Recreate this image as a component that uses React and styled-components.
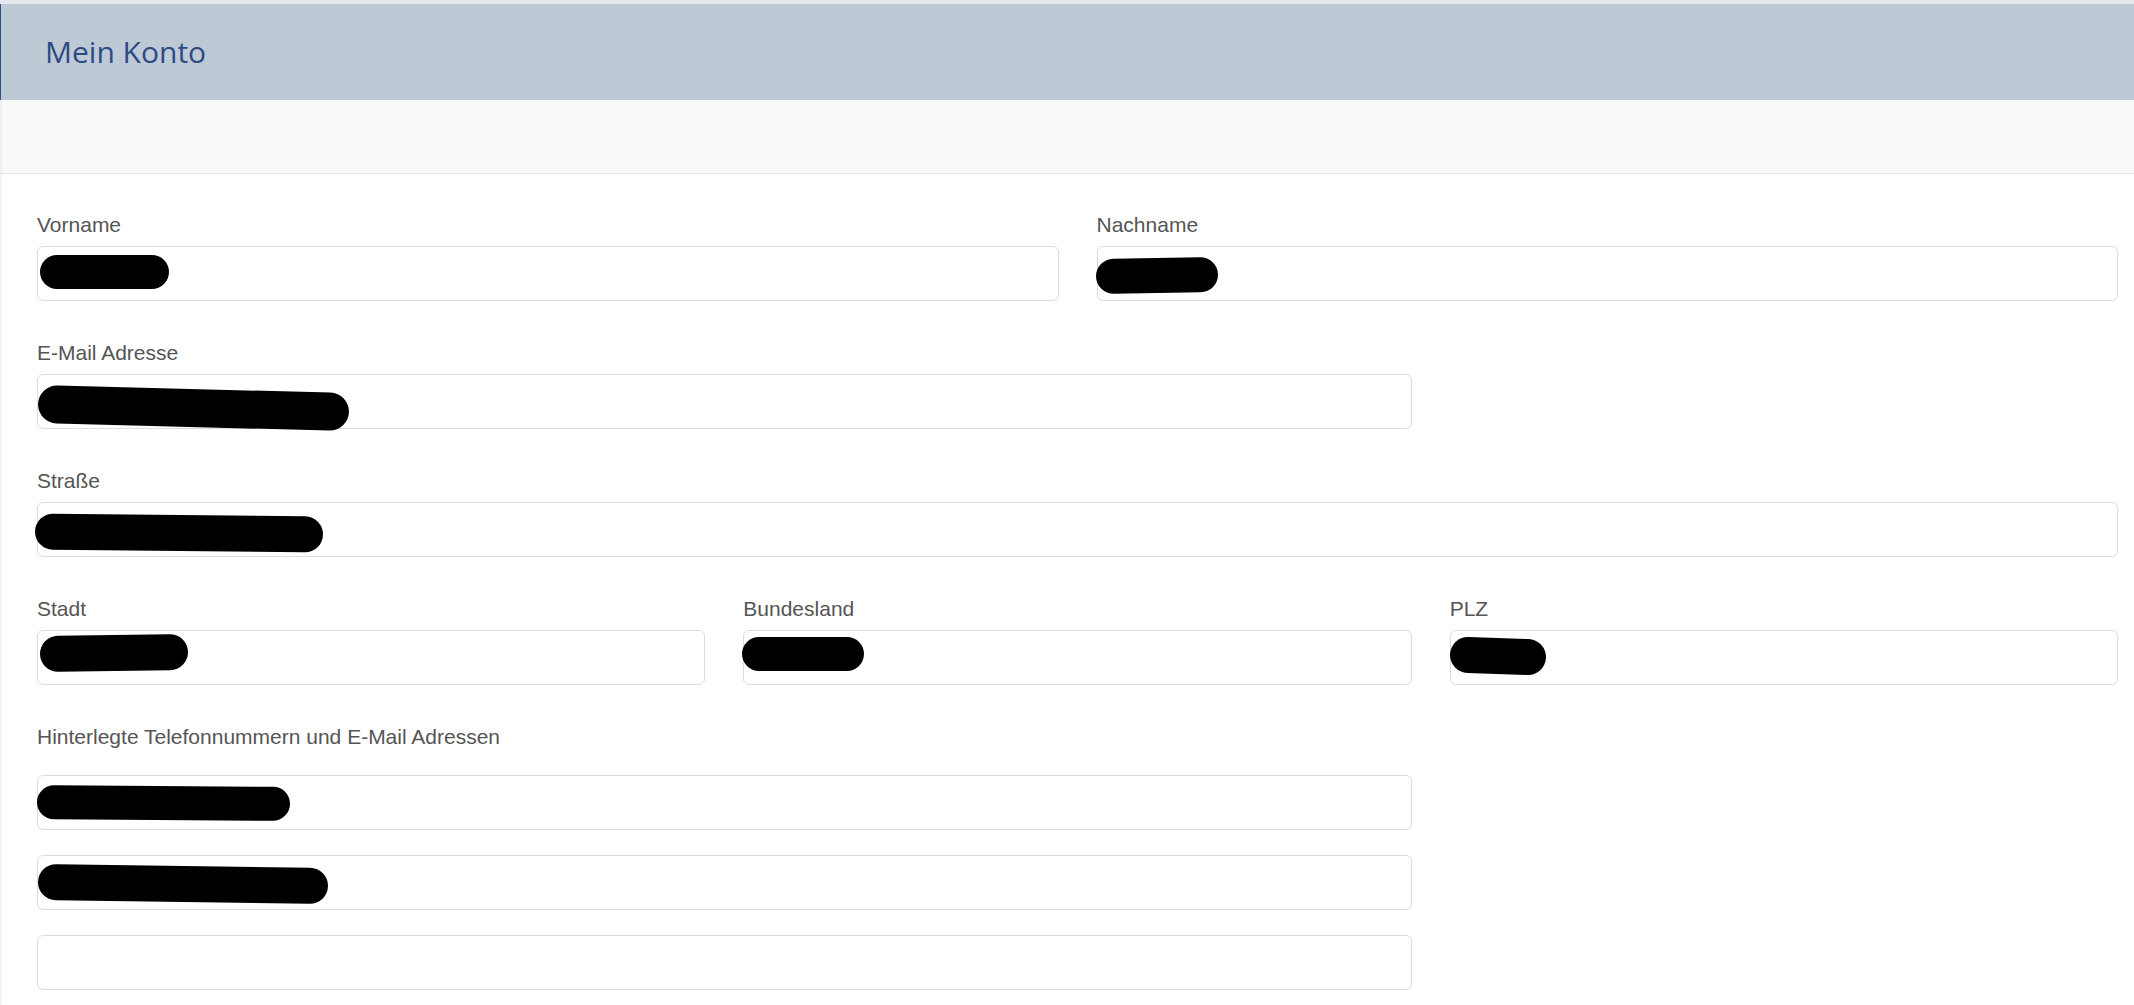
import React from "react";
import styled, { createGlobalStyle } from "styled-components";

const GlobalStyle = createGlobalStyle`
  * { box-sizing: border-box; }
  html, body {
    margin: 0;
    padding: 0;
    background: #ffffff;
  }
  body {
    font-family: "Liberation Sans", Arial, sans-serif;
  }
`;

const rows = [
  {
    cols: 2,
    fields: [
      { label: "Vorname", blob: { l: 2, t: 8, w: 129, h: 34 } },
      { label: "Nachname", blob: { l: -2, t: 11, w: 122, h: 35, r: -1 } },
    ],
  },
  {
    cols: 3,
    fields: [{ label: "E-Mail Adresse", span: 2, blob: { l: 0, t: 14, w: 311, h: 38, r: 1.5 } }],
  },
  {
    cols: 1,
    fields: [{ label: "Straße", blob: { l: -3, t: 12, w: 288, h: 36, r: 0.6 } }],
  },
  {
    cols: 3,
    fields: [
      { label: "Stadt", blob: { l: 2, t: 4, w: 148, h: 36, r: -0.8 } },
      { label: "Bundesland", blob: { l: -2, t: 6, w: 122, h: 34 } },
      { label: "PLZ", blob: { l: -1, t: 7, w: 96, h: 36, r: 2 } },
    ],
  },
];

const contacts = [
  { l: -1, t: 10, w: 253, h: 34, r: 0.4 },
  { l: 0, t: 10, w: 290, h: 36, r: 0.8 },
  null,
];

const blobStyle = (b) => ({
  left: b.l,
  top: b.t,
  width: b.w,
  height: b.h,
  transform: `rotate(${b.r || 0}deg)`,
});

export default function App() {
  return (
    <>
      <GlobalStyle />
      <Page>
        <Header>
          <Title>Mein Konto</Title>
        </Header>
        <SubBar />

        <Content>
          {rows.map((row, i) => (
            <Row key={i} $cols={row.cols}>
              {row.fields.map((f) => (
                <Group key={f.label} $span={f.span}>
                  <Label>{f.label}</Label>
                  <Field>
                    <Blob style={blobStyle(f.blob)} />
                  </Field>
                </Group>
              ))}
            </Row>
          ))}

          <Row $cols={3}>
            <Group $span={2}>
              <Label $wide>Hinterlegte Telefonnummern und E-Mail Adressen</Label>
              <ContactList>
                {contacts.map((b, i) => (
                  <Field key={i}>{b && <Blob style={blobStyle(b)} />}</Field>
                ))}
              </ContactList>
            </Group>
          </Row>
        </Content>
      </Page>
    </>
  );
}

const Page = styled.div`
  display: flex;
  flex-direction: column;
  min-height: 1005px;
  border-top: 4px solid #e6e8eb;
`;

const Header = styled.div`
  display: flex;
  align-items: center;
  height: 96px;
  padding-left: 44px;
  background: #bdcad6;
  border-left: 1px solid #2f4e8a;
`;

const Title = styled.h1`
  margin: 0;
  font-family: "Open Sans", "Noto Sans", sans-serif;
  font-size: 30px;
  font-weight: 400;
  line-height: 40px;
  color: #2d4a84;
`;

const SubBar = styled.div`
  height: 74px;
  background: #f9f9f9;
  border-bottom: 1px solid #e6e6e6;
  border-left: 2px solid #f0f0f0;
`;

const Content = styled.div`
  flex: 1;
  display: flex;
  flex-direction: column;
  gap: 37px;
  padding: 36px 16px 8px 35px;
  border-left: 2px solid #f3f3f3;
`;

const Row = styled.div`
  display: grid;
  grid-template-columns: repeat(${(p) => p.$cols}, 1fr);
  column-gap: 38px;
`;

const Group = styled.div`
  display: flex;
  flex-direction: column;
  grid-column: span ${(p) => p.$span || 1};
`;

const Label = styled.label`
  display: block;
  font-size: 21px;
  line-height: 30px;
  color: #555555;
  margin-bottom: ${(p) => (p.$wide ? "23px" : "6px")};
`;

const ContactList = styled.div`
  display: flex;
  flex-direction: column;
  gap: 25px;
`;

const Field = styled.div`
  position: relative;
  height: 55px;
  border: 1px solid #dcdcdc;
  border-radius: 6px;
  background: #ffffff;
`;

const Blob = styled.span`
  position: absolute;
  background: #000000;
  border-radius: 999px;
`;
